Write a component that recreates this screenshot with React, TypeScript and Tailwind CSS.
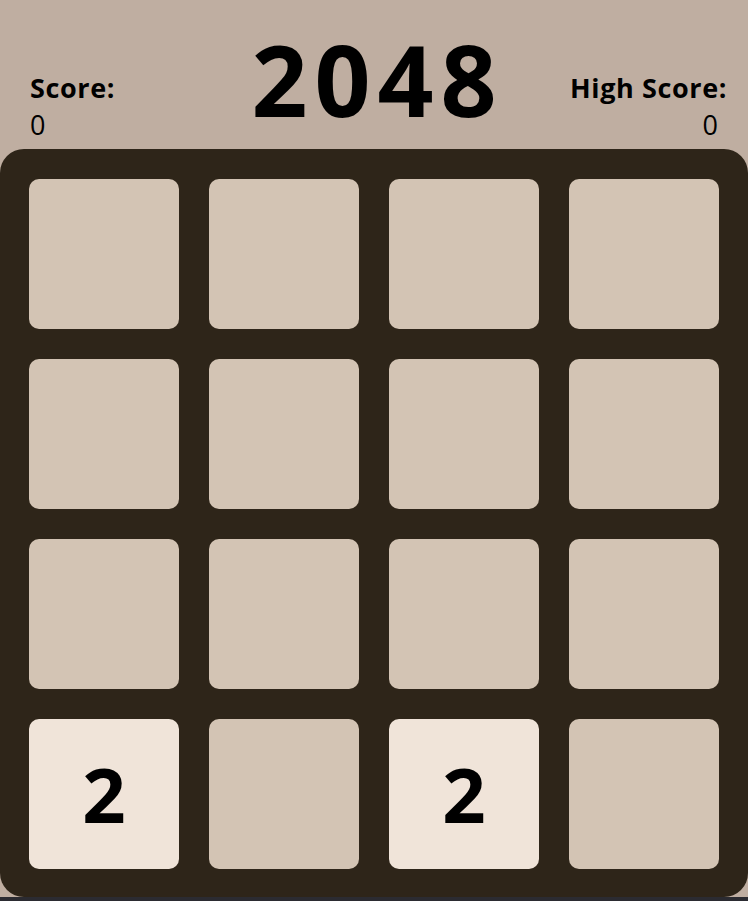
import React from "react";

const board: number[][] = [
  [0, 0, 0, 0],
  [0, 0, 0, 0],
  [0, 0, 0, 0],
  [2, 0, 2, 0],
];

export default function App() {
  return (
    <div
      className="w-[748px] h-[901px] bg-[#bfaea1] flex flex-col overflow-hidden"
      style={{ fontFamily: '"Open Sans", "Noto Sans", sans-serif' }}
    >
      <div className="h-[149px] grid grid-cols-[1fr_auto_1fr] items-start px-[30px]">
        <div className="flex flex-col items-start pt-[69px] text-black">
          <div className="text-[27px] leading-[37px] font-bold tracking-[0.6px]">Score:</div>
          <div className="text-[27px] leading-[37px] font-normal">0</div>
        </div>
        <div className="pt-[24px] pl-[7px] text-[98px] leading-[110px] font-bold text-black tracking-[7px]">
          2048
        </div>
        <div className="flex flex-col items-end pt-[69px] text-black">
          <div className="text-[27px] leading-[37px] font-bold tracking-[0.6px] -mr-[9px]">High Score:</div>
          <div className="text-[27px] leading-[37px] font-normal">0</div>
        </div>
      </div>
      <div className="w-[748px] h-[748px] bg-[#2e2519] rounded-[24px] pt-[30px] px-[29px] grid grid-cols-4 grid-rows-[repeat(4,150px)] gap-[30px] shrink-0">
        {board.flat().map((v, i) => (
          <div
            key={i}
            className={
              v
                ? "w-[150px] h-[150px] rounded-[10px] bg-[#f0e4d9] flex items-center justify-center text-[76px] font-bold text-black"
                : "w-[150px] h-[150px] rounded-[10px] bg-[#d3c4b4]"
            }
          >
            {v ? v : null}
          </div>
        ))}
      </div>
      <div className="h-[4px] bg-[#2b2b31]" />
    </div>
  );
}
